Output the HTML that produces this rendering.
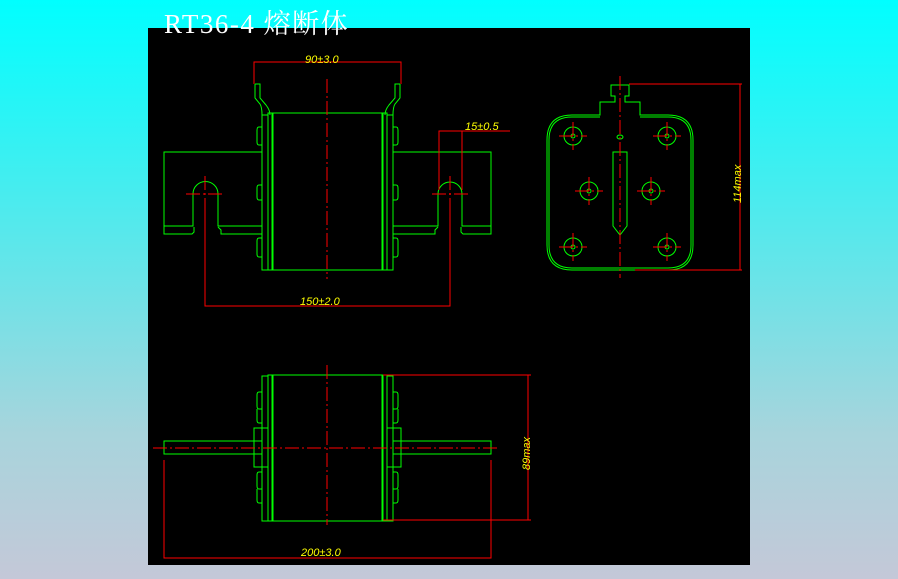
<!DOCTYPE html>
<html><head><meta charset="utf-8"><style>
html,body{margin:0;padding:0}
body{width:898px;height:579px;overflow:hidden;background:linear-gradient(#00ffff 0%,#40eef0 30%,#a8d4dc 75%,#c4c8d8 100%);position:relative}
svg{position:absolute;left:0;top:0}
</style></head><body>
<svg width="898" height="579" viewBox="0 0 898 579" xmlns="http://www.w3.org/2000/svg">
<rect x="148" y="28" width="602" height="537" fill="#000"/>
<text x="164" y="33" fill="#fff" font-family="Liberation Serif, Noto Serif CJK SC, serif" font-size="27" letter-spacing="1.5">RT36-4 熔断体</text>
<g fill="none" stroke="#00ff00" stroke-width="1">
<!-- top view -->
<rect x="273" y="113" width="109" height="157"/>
<rect x="262" y="115" width="6" height="155"/><rect x="268" y="113" width="4" height="157"/>
<rect x="383" y="113" width="4" height="157"/><rect x="387" y="115" width="6" height="155"/>
<path d="M255 84h5v14l6 7q4 5 4 10M255 84v14l5 6q2 3 2 11"/>
<path d="M400 84h-5v14l-6 7q-4 5-4 10M400 84v14l-5 6q-2 3-2 11"/>
<path d="M262 127h-3q-2 0-2 3v12q0 3 2 3h3M262 185h-3q-2 0-2 3v9q0 3 2 3h3M262 238h-3q-2 0-2 3v13q0 3 2 3h3"/>
<path d="M393 127h3q2 0 2 3v12q0 3-2 3h-3M393 185h3q2 0 2 3v9q0 3-2 3h-3M393 238h3q2 0 2 3v13q0 3-2 3h-3"/>
<path d="M262 152H164v82h28l2-2v-5M262 226H218v-32a12.5 12.5 0 0 0-25 0v32H164M218 227l3 3v4h41"/>
<path d="M393 152h98v82h-28l-2-2v-5M393 226h45v-32a12 12 0 0 1 24 0v32h29M438 227l-3 3v4h-42"/>
<!-- side view -->
<path d="M611 85h18v11h-4v6h15v13h28q25 0 25 25v105q0 25-25 25h-96q-25 0-25-25v-105q0-25 25-25h28v-13h15v-6h-4z"/>
<path d="M600 117h-28q-23 0-23 23v105q0 23 23 23h96q23 0 23-23v-105q0-23-23-23h-28"/>
<circle cx="573" cy="136" r="9"/><circle cx="667" cy="136" r="9"/>
<circle cx="589" cy="191" r="9"/><circle cx="651" cy="191" r="9"/>
<circle cx="573" cy="247" r="9"/><circle cx="667" cy="247" r="9"/>
<circle cx="573" cy="136" r="2"/><circle cx="667" cy="136" r="2"/><circle cx="589" cy="191" r="2"/><circle cx="651" cy="191" r="2"/><circle cx="573" cy="247" r="2"/><circle cx="667" cy="247" r="2"/>
<ellipse cx="620" cy="137" rx="3" ry="2"/>
<path d="M613 152h14v74l-7 9-7-9z"/>
<!-- bottom view -->
<rect x="273" y="375" width="109" height="146"/>
<rect x="262" y="376" width="6" height="145"/><rect x="268" y="375" width="4" height="146"/>
<rect x="383" y="375" width="4" height="146"/><rect x="387" y="376" width="6" height="145"/>
<path d="M262 392h-3q-2 0-2 3v11q0 3 2 3h3M257 409v11q0 3 2 3h3M262 472h-3q-2 0-2 3v11q0 3 2 3h3M257 489v11q0 3 2 3h3"/>
<path d="M393 392h3q2 0 2 3v11q0 3-2 3h-3M398 409v11q0 3-2 3h-3M393 472h3q2 0 2 3v11q0 3-2 3h-3M398 489v11q0 3-2 3h-3"/>
<rect x="254" y="428" width="14" height="39"/><path d="M254 441h8M254 454h8"/>
<rect x="387" y="428" width="14" height="39"/><path d="M393 441h8M393 454h8"/>
<path d="M254 441H164v13h90M401 441h90v13h-90"/>
</g>
<g fill="none" stroke="#ff0000" stroke-width="1">
<path d="M254 84V62h147v22M254 62h147"/>
<path d="M439 190V131h71M462 190V131"/>
<path d="M205 210v96h245v-96"/>
<path d="M629 84h113M635 270h107M740 84v186"/>
<path d="M383 375h148M383 520h148M528 375v145"/>
<path d="M164 460v98h327v-98"/>
</g>
<g fill="none" stroke="#ff0000" stroke-width="1" stroke-dasharray="14,3,2,3">
<path d="M327 79v200M620 76v202M327 365v160M153 448h347"/>
<path d="M186 194h38M432 194h37M205 176v60M450 176v60"/>
<path d="M559 136h28M653 136h28M573 122v28M667 122v28M575 191h28M637 191h28M589 177v28M651 177v28M559 247h28M653 247h28M573 233v28M667 233v28"/>
</g>
<g fill="#ffff00" font-family="Liberation Sans, sans-serif" font-size="11" font-style="italic">
<text x="305" y="63">90±3.0</text>
<text x="465" y="130">15±0.5</text>
<text x="300" y="305">150±2.0</text>
<text x="301" y="556">200±3.0</text>
<text transform="translate(741,203) rotate(-90)">114max</text>
<text transform="translate(530,470) rotate(-90)">89max</text>
</g>
</svg>
</body></html>
